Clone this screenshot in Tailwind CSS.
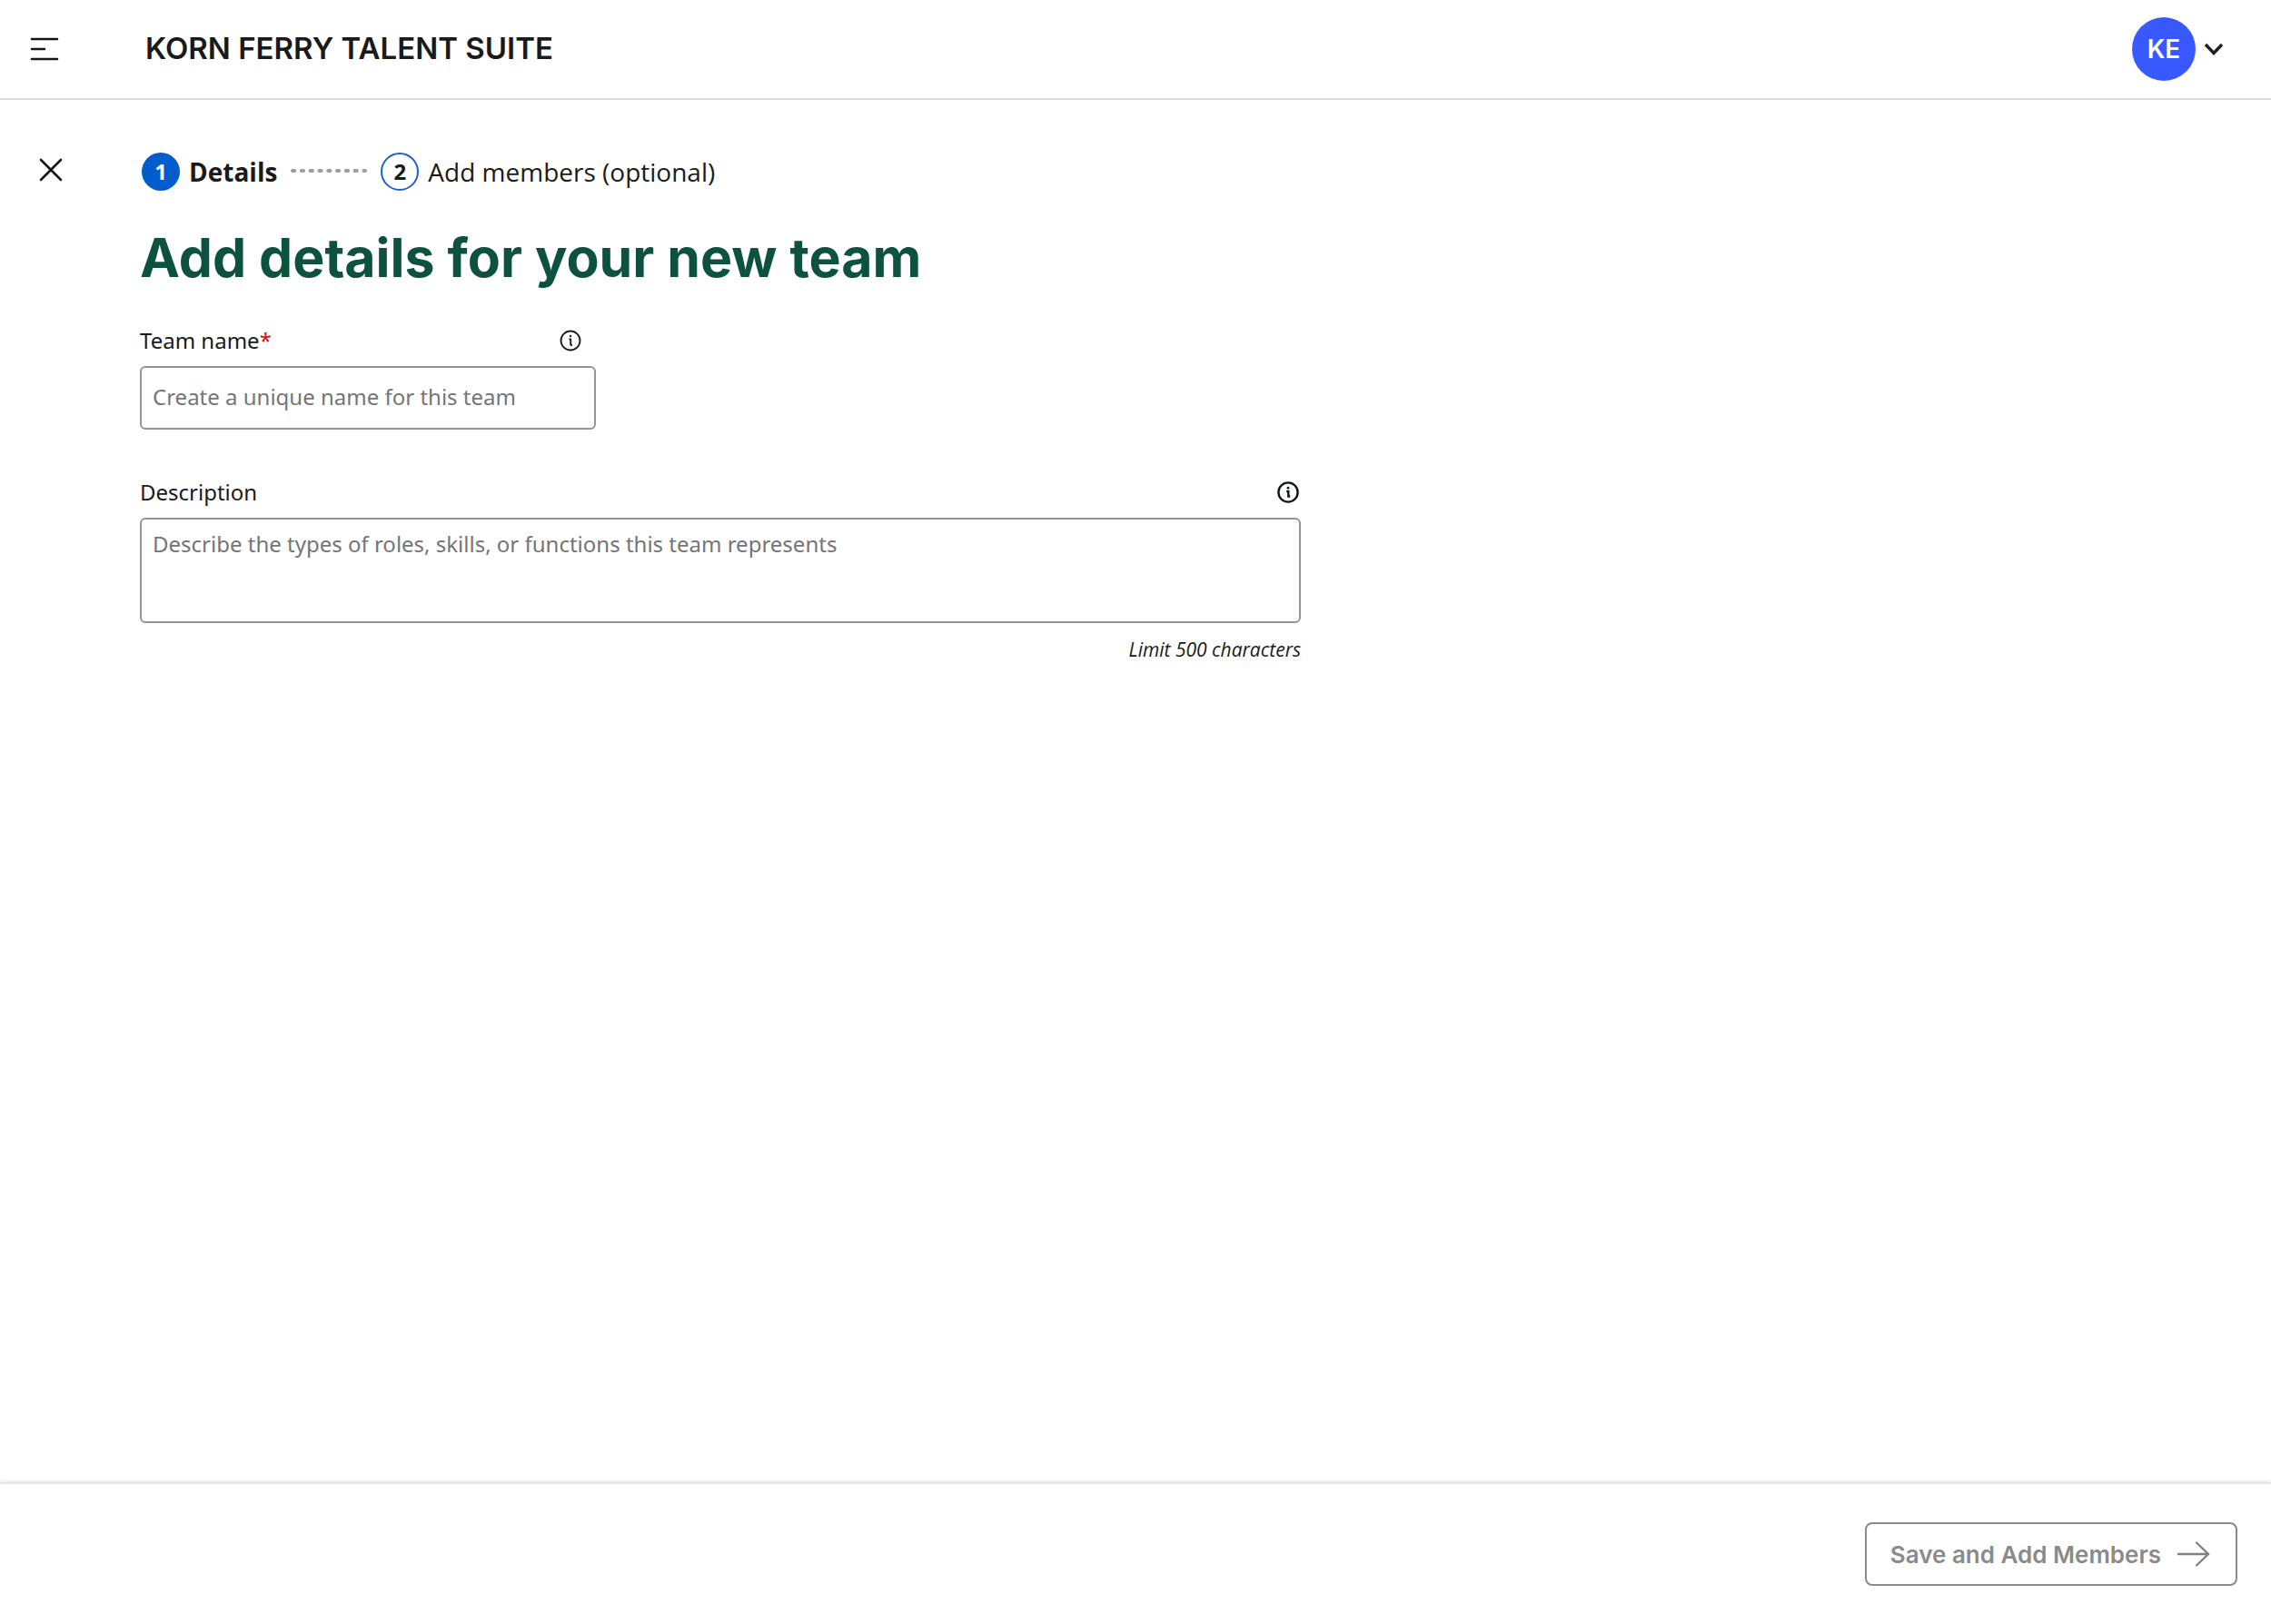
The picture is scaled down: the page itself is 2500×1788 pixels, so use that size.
<!DOCTYPE html>
<html lang="en">
<head>
<meta charset="utf-8">
<title>Korn Ferry Talent Suite</title>
<meta name="viewport" content="width=device-width, initial-scale=1">
<script src="https://cdn.jsdelivr.net/npm/@tailwindcss/browser@4"></script>
</head>
<body class="flex min-h-screen flex-col bg-white font-['Open_Sans',sans-serif] text-[#1a1a1a]">
<header class="flex h-[110px] shrink-0 items-center border-b-2 border-[#dcdedd] pr-[51px] pl-8">
  <button type="button" aria-label="Menu" class="mr-[92px]">
    <svg class="block size-9" viewBox="0 0 36 36" fill="none" stroke="#12141c" stroke-width="2.6" stroke-linecap="round"><path d="M3 7H31M3 18H17M3 29H31"/></svg>
  </button>
  <span class="font-['Inter',sans-serif] text-[33px] font-semibold">KORN FERRY TALENT SUITE</span>
  <button type="button" aria-label="Account" class="ml-auto flex items-center gap-2">
    <span class="flex size-[70px] items-center justify-center rounded-full bg-[#3859ff] font-['Inter',sans-serif] text-[28px] font-semibold text-white">KE</span>
    <svg class="block size-6" viewBox="0 0 24 24" fill="none" stroke="#1f1f1f" stroke-width="3.4"><path d="M3 7L12 16.500L21 7"/></svg>
  </button>
</header>

<main class="flex grow pt-[58px] pl-10">
  <button type="button" aria-label="Close" class="mr-[82px] self-start pt-1">
    <svg class="block size-8" viewBox="0 0 32 32" fill="none" stroke="#12141c" stroke-width="2.6" stroke-linecap="round"><path d="M5 4L27 26M27 4L5 26"/></svg>
  </button>
  <div class="w-full max-w-[1278px]">
    <ol class="flex h-[42px] items-center pl-0.5 text-[28px]">
      <li class="flex items-center gap-2.5 font-bold">
        <span class="flex size-[42px] items-center justify-center rounded-full bg-[#005dcb] text-2xl text-white">1</span>
        Details
      </li>
      <li aria-hidden="true" class="mx-[15px]">
        <svg class="block h-2 w-[84px]" viewBox="0 0 84 8" stroke="#95a0a8" stroke-width="4" stroke-linecap="round" stroke-dasharray="2.300 7.500"><path d="M2 3H82"/></svg>
      </li>
      <li class="flex items-center gap-2.5">
        <span class="flex size-[42px] items-center justify-center rounded-full border-2 border-[#1c62c9] text-2xl font-bold">2</span>
        Add members (optional)
      </li>
    </ol>
    <h1 class="mt-9 font-['Inter',sans-serif] text-[59px] leading-[76px] font-bold text-[#0c523e]">Add details for your new team</h1>

    <form>
      <div class="mt-8 w-[502px]">
        <div class="flex h-[42px] items-center justify-between pr-4">
          <label for="team-name" class="font-['Noto_Sans',sans-serif] text-2xl">Team name<span class="text-[#e30613]">*</span></label>
          <button type="button" aria-label="About team name">
            <svg class="block size-6" viewBox="0 0 24 24" fill="none" stroke="#1f1f1f" stroke-width="1.900"><circle cx="12" cy="12" r="10.500"/><path d="M10.500 10.500H12.200V17M12 17H14"/><circle cx="12" cy="7" r="1.200" fill="#1f1f1f" stroke="none"/></svg>
          </button>
        </div>
        <input id="team-name" type="text" required placeholder="Create a unique name for this team" class="mt-[7px] block h-[70px] w-full rounded-md border-2 border-[#949494] px-3 pb-1 font-['Noto_Sans',sans-serif] text-2xl placeholder:text-[#757575]">
      </div>
      <div class="mt-12">
        <div class="flex h-[42px] items-center justify-between pr-0.5">
          <label for="description" class="font-['Noto_Sans',sans-serif] text-2xl">Description</label>
          <button type="button" aria-label="About description">
            <svg class="block size-6" viewBox="0 0 24 24" fill="none" stroke="#12141c" stroke-width="2.400"><circle cx="12" cy="12" r="10.600"/><path d="M10.200 11H12.300V16.500H14.200"/><circle cx="12" cy="7.200" r="1.400" fill="#12141c" stroke="none"/></svg>
          </button>
        </div>
        <textarea id="description" maxlength="500" placeholder="Describe the types of roles, skills, or functions this team represents" class="mt-[7px] block h-[116px] w-full resize-none rounded-md border-2 border-[#949494] px-3 py-[9px] font-['Noto_Sans',sans-serif] text-2xl leading-9 placeholder:text-[#757575]"></textarea>
        <p class="mt-[13px] text-right text-[21px] leading-8 italic">Limit 500 characters</p>
      </div>
    </form>
  </div>
</main>

<footer class="flex h-[156px] shrink-0 items-start justify-end border-t-2 border-[#e6e6e6] pt-[42px] pr-[37px] shadow-[0_-2px_3px_#ececec]">
  <button type="button" disabled class="flex h-[70px] items-center gap-[18px] rounded-lg border-2 border-[#8a8a8a] pr-7 pl-[26px] font-['Inter',sans-serif] text-[26px] font-semibold text-[#8a8a8a]">
    Save and Add Members
    <svg class="block h-7 w-9" viewBox="0 0 36 28" fill="none" stroke="#808080" stroke-width="2.300" stroke-linecap="round"><path d="M1 14H34M21 1.500L34 14L21 26.500"/></svg>
  </button>
</footer>
</body>
</html>
